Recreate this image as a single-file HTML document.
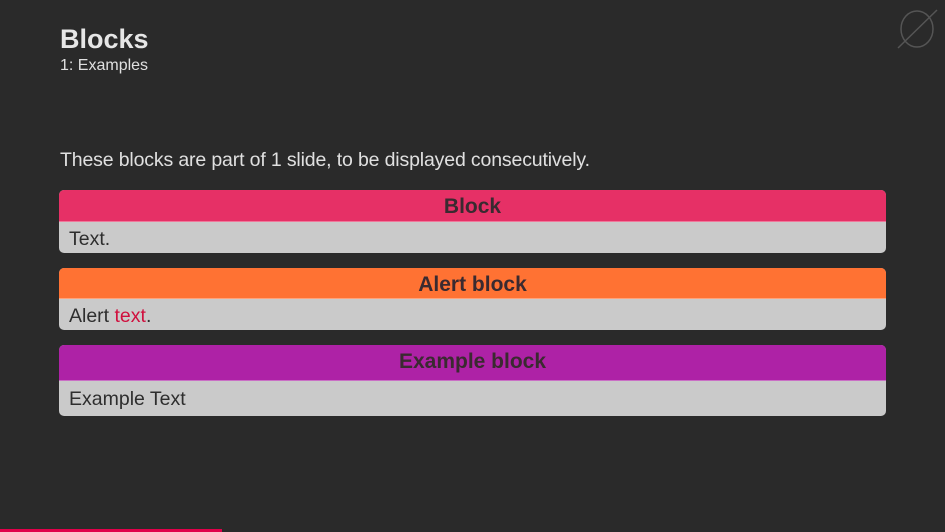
<!DOCTYPE html>
<html><head><meta charset="utf-8"><style>
html,body{margin:0;padding:0}
body{width:945px;height:532px;background:#2a2a2a;position:relative;overflow:hidden;font-family:"Liberation Sans",sans-serif;}
.a{position:absolute}
.blk{position:absolute;left:59px;width:827px;border-radius:5px;overflow:hidden;background:#cacaca}
.h{text-align:center;font-weight:bold;color:#3a2a30;font-size:21px;border-bottom:1px solid rgba(255,255,255,.35)}
.b{color:#2e2e2e;font-size:19.5px;padding-left:10px}
</style></head><body>
<div class="a" style="left:60px;top:24px;font-size:27px;font-weight:bold;color:#e6e6e6">Blocks</div>
<div class="a" style="left:60px;top:57px;font-size:16px;color:#e0e0e0">1: Examples</div>
<svg class="a" style="left:895px;top:8px" width="45" height="45"><ellipse cx="22" cy="21" rx="16" ry="18" fill="none" stroke="#555" stroke-width="1.5"/><line x1="3" y1="40" x2="42" y2="2" stroke="#555" stroke-width="1.5"/></svg>
<div class="a" style="left:60px;top:149px;font-size:19.5px;color:#e0e0e0;letter-spacing:-0.15px">These blocks are part of 1 slide, to be displayed consecutively.</div>
<div class="blk" style="top:190px;height:63px">
<div class="h" style="background:#e63066;height:31px;line-height:34px">Block</div>
<div class="b" style="line-height:34px">Text.</div></div>
<div class="blk" style="top:268px;height:62px">
<div class="h" style="background:#ff7233;height:30px;line-height:33px">Alert block</div>
<div class="b" style="line-height:35px">Alert <span style="color:#d0103e">text</span>.</div></div>
<div class="blk" style="top:345px;height:71px">
<div class="h" style="background:#ae22a6;height:35px;line-height:34px">Example block</div>
<div class="b" style="line-height:37px">Example Text</div></div>
<div class="a" style="left:0;top:529px;width:222px;height:3px;background:#e0004a"></div>
</body></html>
